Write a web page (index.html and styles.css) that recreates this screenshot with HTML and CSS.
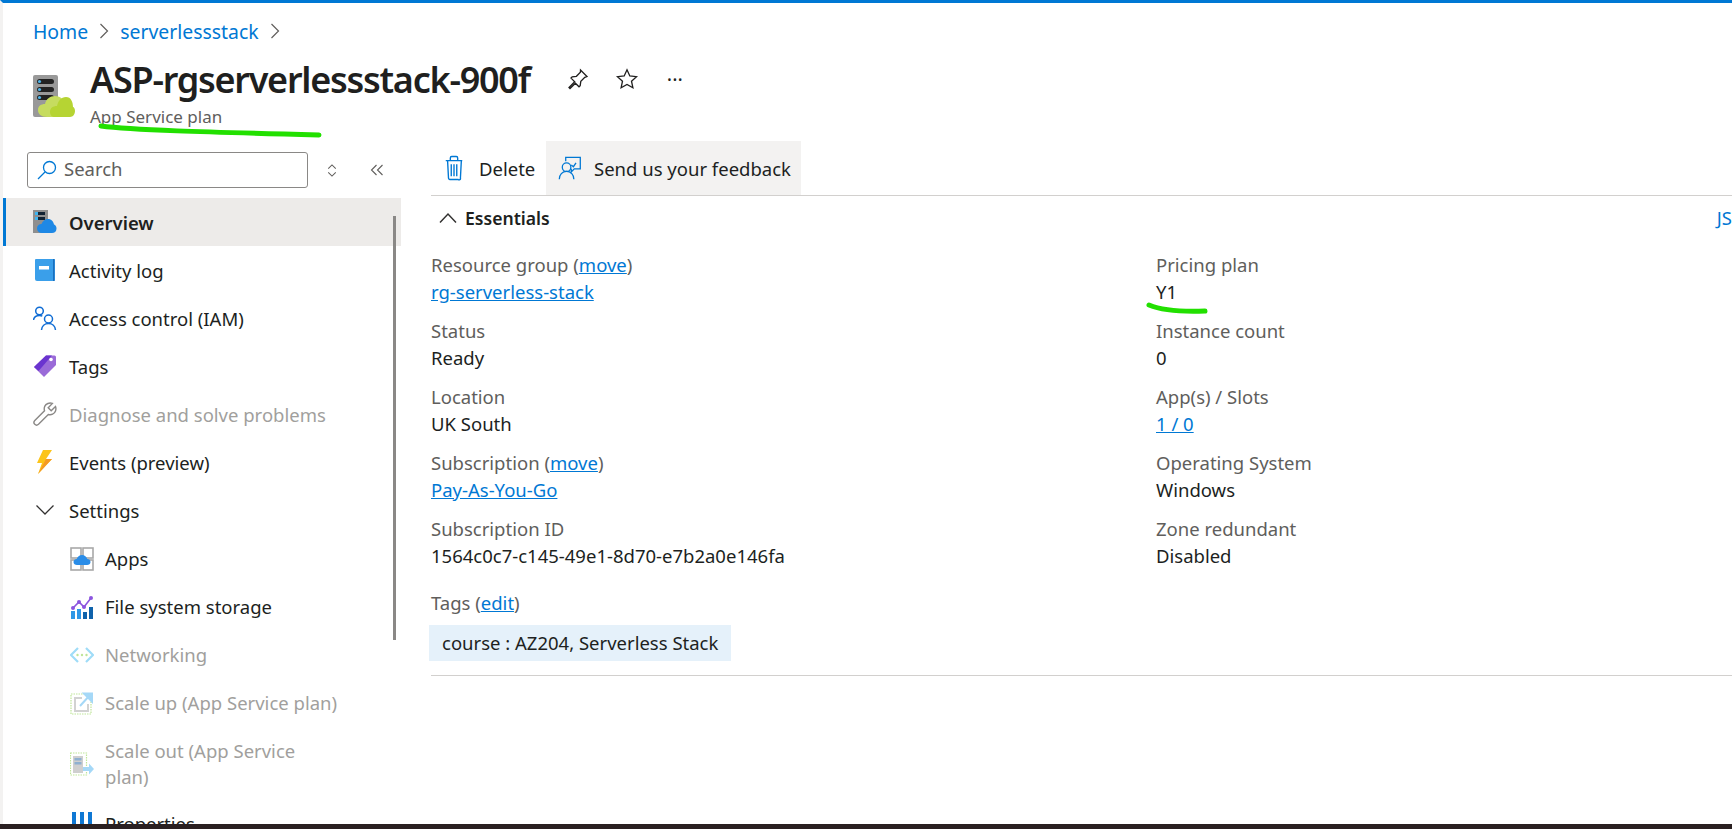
FILE: index.html
```html
<!DOCTYPE html>
<html lang="en">
<head>
    <meta charset="UTF-8">
    <title>ASP-rgserverlessstack-900f - App Service plan</title>
    <link rel="stylesheet" href="styles.css">
</head>
<body>

<div class="page">
    <header class="page-head">
        <nav class="crumbs">
            <a href="#">Home</a>
            <svg class="crumb-sep" viewBox="0 0 10 18"><path d="M1.5 2l7 7-7 7"/></svg>
            <a href="#">serverlessstack</a>
            <svg class="crumb-sep" viewBox="0 0 10 18"><path d="M1.5 2l7 7-7 7"/></svg>
        </nav>
        <div class="title-row">
            <svg class="plan-logo" viewBox="0 0 42 42">
                <rect width="25" height="42" rx="2" fill="#999"/>
                <rect x="4" y="4" width="17" height="5" rx="2.5" fill="#222"/>
                <rect x="4" y="12" width="17" height="5" rx="2.5" fill="#222"/>
                <rect x="4" y="20" width="17" height="5" rx="2.5" fill="#222"/>
                <circle cx="6.5" cy="6.5" r="1.6" fill="#50b4e8"/>
                <circle cx="6.5" cy="14.5" r="1.6" fill="#50b4e8"/>
                <circle cx="6.5" cy="22.5" r="1.6" fill="#50b4e8"/>
                <path d="M14 42c-6 0-9-3-9-7 0-4 3-6 7-6 1-5 5-8 10-8 6 0 9 4 10 9l-2 12z" fill="#c6dc5f"/>
                <path d="M22 42c-3 0-5-2-5-5 0-4 3-6 7-6 1-5 4-9 9-9 5 0 7 5 7 10 1 0 2 2 2 4 0 3-2 6-5 6z" fill="#b6d433"/>
            </svg>
            <div class="title-text">
                <div class="title-line">
                    <h1>ASP-rgserverlessstack-900f</h1>
                    <svg class="title-btn" viewBox="0 0 24 24"><path d="M14.5 3l6.5 6.5-2.2.9-4 4-.6 4.2-1.2 1.2-3.6-3.6L4 21.5l-1-1 5.7-5.8-3.7-3.6 1.2-1.2 4.2-.6 4-4z"/></svg>
                    <svg class="title-btn" viewBox="0 0 24 24"><path d="M12 2.8l2.8 6.2 6.7.7-5 4.5 1.4 6.6L12 17.4l-5.9 3.4 1.4-6.6-5-4.5 6.7-.7z"/></svg>
                    <span class="title-more">···</span>
                </div>
                <div class="subtitle">App Service plan</div>
            </div>
        </div>
    </header>

    <div class="main">
        <aside class="sidebar">
            <div class="search-row">
                <div class="search-box">
                    <svg class="search-icon" viewBox="0 0 20 20"><circle cx="12.5" cy="7.5" r="6"/><path d="M8 12l-7 7"/></svg>
                    <span class="search-text">Search</span>
                </div>
                <svg class="updown" viewBox="0 0 12 16"><path d="M2 6l4-4 4 4M2 10l4 4 4-4"/></svg>
                <svg class="collapse" viewBox="0 0 14 12"><path d="M6.500 1l-5 5 5 5M12.500 1l-5 5 5 5"/></svg>
            </div>
            <ul class="nav">
                <li class="nav-item active">
                    <svg class="nav-icon" viewBox="0 0 24 24">
                        <rect x="0" y="0" width="15" height="23" fill="#8f8f8f"/>
                        <rect x="2" y="2" width="10" height="3" fill="#123"/>
                        <rect x="2" y="7" width="10" height="3" fill="#123"/>
                        <rect x="2" y="2" width="3" height="3" fill="#3fb4ef"/>
                        <rect x="2" y="7" width="3" height="3" fill="#3fb4ef"/>
                        <path d="M9 23c-3 0-5-2-5-4.500 0-3 2-4.500 4.500-4.500 1-3 3.500-5 6.500-5 3.500 0 5.500 2.500 6 5.500 1.500.5 2.500 2 2.500 4 0 3-2 4.500-4.500 4.500z" fill="#1e88e5"/>
                    </svg>
                    <span>Overview</span>
                </li>
                <li class="nav-item">
                    <svg class="nav-icon" viewBox="0 0 24 24">
                        <path d="M3 1h18a1 1 0 011 1v20a1 1 0 01-1 1H4a2 2 0 01-2-2V2a1 1 0 011-1z" fill="#3a9fea"/>
                        <path d="M20 1h1.500v22H20z" fill="#1a6fbd"/>
                        <rect x="6" y="8" width="10" height="3.500" fill="#fff"/>
                    </svg>
                    <span>Activity log</span>
                </li>
                <li class="nav-item">
                    <svg class="nav-icon line-blue" viewBox="0 0 24 24">
                        <circle cx="6.500" cy="5" r="3.800"/>
                        <path d="M0.500 14c.5-3 3-4.500 6-4.500 1 0 2 .2 2.800.5"/>
                        <circle cx="15.500" cy="13" r="4"/>
                        <path d="M8.500 24c.3-3.800 3.200-6.500 7-6.500s6.700 2.700 7 6.500"/>
                    </svg>
                    <span>Access control (IAM)</span>
                </li>
                <li class="nav-item">
                    <svg class="nav-icon" viewBox="0 0 24 24">
                        <path d="M1 13L13 1.500h8.500a1.500 1.500 0 011.500 1.500v8L11 23z" fill="#9a6bd8"/>
                        <path d="M1 13L13 1.500h6L5.500 17z" fill="#6a34cf"/>
                        <circle cx="18" cy="5.500" r="1.800" fill="#fff"/>
                    </svg>
                    <span>Tags</span>
                </li>
                <li class="nav-item off">
                    <svg class="nav-icon line-gray" viewBox="0 0 24 24">
                        <path d="M22.500 4.500l-4.300 4.200-3-3L19.400 1.400c-3-1-6.500.2-7.700 3-.6 1.500-.6 3-.2 4.400L1.800 18.600c-1 1-1 2.700 0 3.700s2.600 1 3.700 0l9.800-9.800c1.400.4 3 .3 4.300-.3 2.800-1.300 4-4.700 2.900-7.700z"/>
                    </svg>
                    <span>Diagnose and solve problems</span>
                </li>
                <li class="nav-item">
                    <svg class="nav-icon" viewBox="0 0 24 24">
                        <path d="M10 0h9l-6 9h6L5 24l4-11H4z" fill="#fcc419"/>
                        <path d="M13 9h6L5 24z" fill="#f59a23"/>
                    </svg>
                    <span>Events (preview)</span>
                </li>
                <li class="nav-item settings">
                    <svg class="nav-icon line-dark" viewBox="0 0 24 24"><path d="M3.500 7.500l8.500 8.500 8.500-8.500"/></svg>
                    <span>Settings</span>
                </li>
                <li class="nav-item child">
                    <svg class="nav-icon" viewBox="0 0 24 24">
                        <g fill="none" stroke="#a8a8a8" stroke-width="1.600">
                            <rect x="1" y="1" width="10" height="10"/><rect x="13" y="1" width="10" height="10"/>
                            <rect x="1" y="13" width="10" height="10"/><rect x="13" y="13" width="10" height="10"/>
                        </g>
                        <path d="M7 18c-2 0-3.500-1-3.500-3 0-1.800 1.500-3 3.200-3 .6-2 2.700-4 5.300-4s4.700 2 5.300 4c1.700 0 3.200 1.200 3.200 3 0 2-1.500 3-3.500 3z" fill="#2a8de8"/>
                    </svg>
                    <span>Apps</span>
                </li>
                <li class="nav-item child">
                    <svg class="nav-icon" viewBox="0 0 24 24">
                        <rect x="1" y="16" width="4" height="8" fill="#2f97e6"/>
                        <rect x="7" y="14" width="4" height="10" fill="#2f97e6"/>
                        <rect x="13" y="17" width="4" height="7" fill="#0f62ab"/>
                        <rect x="19" y="12" width="4" height="12" fill="#0f62ab"/>
                        <path d="M3 13l6-6 5 5 7-9" fill="none" stroke="#8c55df" stroke-width="1.600"/>
                        <circle cx="3" cy="13" r="2" fill="#8c55df"/><circle cx="9" cy="7" r="2" fill="#8c55df"/>
                        <circle cx="14" cy="12" r="2" fill="#8c55df"/><circle cx="21" cy="3" r="2" fill="#8c55df"/>
                    </svg>
                    <span>File system storage</span>
                </li>
                <li class="nav-item child off">
                    <svg class="nav-icon" viewBox="0 0 24 24">
                        <path d="M8 5l-7 7 7 7M16 5l7 7-7 7" fill="none" stroke="#9fdcf8" stroke-width="2.200"/>
                        <circle cx="7.500" cy="12" r="1.200" fill="#bfe59a"/><circle cx="12" cy="12" r="1.200" fill="#bfe59a"/><circle cx="16.500" cy="12" r="1.200" fill="#bfe59a"/>
                    </svg>
                    <span>Networking</span>
                </li>
                <li class="nav-item child off">
                    <svg class="nav-icon" viewBox="0 0 24 24">
                        <rect x="1" y="3" width="20" height="20" fill="none" stroke="#bfe59a" stroke-width="1.200" stroke-dasharray="1.500 1"/>
                        <path d="M12 7H5v13h13v-7" fill="none" stroke="#d2d2d2" stroke-width="2"/>
                        <path d="M10 15L20 4M14 2.500h8v8z" fill="#a5d8f7" stroke="#a5d8f7" stroke-width="2"/>
                    </svg>
                    <span>Scale up (App Service plan)</span>
                </li>
                <li class="nav-item child off two-line">
                    <svg class="nav-icon" viewBox="0 0 24 24">
                        <rect x="0.500" y="1" width="16" height="22" fill="none" stroke="#bfe59a" stroke-width="1.200" stroke-dasharray="1.500 1"/>
                        <rect x="3" y="4" width="10" height="17" fill="#cfcfcf"/>
                        <rect x="4.500" y="6" width="7" height="2.500" fill="#8fb0d0"/>
                        <rect x="4.500" y="10" width="7" height="2.500" fill="#8fb0d0"/>
                        <path d="M13 16h6v-3.500l5 5.500-5 5.500V20h-6z" fill="#a5d8f7" transform="translate(0 -1)"/>
                    </svg>
                    <span>Scale out (App Service plan)</span>
                </li>
                <li class="nav-item child">
                    <svg class="nav-icon" viewBox="0 0 24 24">
                        <rect x="2" y="0" width="4" height="16" fill="#0f78d4"/>
                        <rect x="10" y="0" width="4" height="16" fill="#0f78d4"/>
                        <rect x="18" y="0" width="4" height="16" fill="#0f78d4"/>
                    </svg>
                    <span>Properties</span>
                </li>
            </ul>
            <div class="nav-scroll"></div>
        </aside>

        <section class="content">
            <div class="toolbar">
                <div class="tool first">
                    <svg class="tool-icon" viewBox="0 0 24 28">
                        <path d="M3 6h18M8 6V3a1.500 1.500 0 011.500-1.500h5A1.500 1.500 0 0116 3v3M5 6l1 19a1.500 1.500 0 001.500 1.500h9A1.500 1.500 0 0019 25l1-19M9 10v13M12 10v13M15 10v13"/>
                    </svg>
                    <span>Delete</span>
                </div>
                <div class="tool hover">
                    <svg class="tool-icon wide" viewBox="0 0 28 28">
                        <path d="M9 6V1.500h17V15h-7l-3.500 3.500V15"/>
                        <path d="M15.500 10.500l2.500 2 3-4.500"/>
                        <circle cx="10" cy="13" r="5"/>
                        <path d="M1.500 27c0-5 3.500-9 8.500-9s8.500 4 8.500 9"/>
                    </svg>
                    <span>Send us your feedback</span>
                </div>
            </div>

            <div class="essentials-head">
                <svg class="chev-up" viewBox="0 0 18 12"><path d="M1 10.500L9 2l8 8.500"/></svg>
                <h2>Essentials</h2>
                <a class="json-link" href="#">JS</a>
            </div>

            <div class="facts">
                <div class="fact">
                    <div class="fact-label">Resource group (<a href="#">move</a>)</div>
                    <div class="fact-value"><a href="#">rg-serverless-stack</a></div>
                </div>
                <div class="fact">
                    <div class="fact-label">Pricing plan</div>
                    <div class="fact-value">Y1</div>
                </div>
                <div class="fact">
                    <div class="fact-label">Status</div>
                    <div class="fact-value">Ready</div>
                </div>
                <div class="fact">
                    <div class="fact-label">Instance count</div>
                    <div class="fact-value">0</div>
                </div>
                <div class="fact">
                    <div class="fact-label">Location</div>
                    <div class="fact-value">UK South</div>
                </div>
                <div class="fact">
                    <div class="fact-label">App(s) / Slots</div>
                    <div class="fact-value"><a href="#">1 / 0</a></div>
                </div>
                <div class="fact">
                    <div class="fact-label">Subscription (<a href="#">move</a>)</div>
                    <div class="fact-value"><a href="#">Pay-As-You-Go</a></div>
                </div>
                <div class="fact">
                    <div class="fact-label">Operating System</div>
                    <div class="fact-value">Windows</div>
                </div>
                <div class="fact">
                    <div class="fact-label">Subscription ID</div>
                    <div class="fact-value">1564c0c7-c145-49e1-8d70-e7b2a0e146fa</div>
                </div>
                <div class="fact">
                    <div class="fact-label">Zone redundant</div>
                    <div class="fact-value">Disabled</div>
                </div>
            </div>

            <div class="tags">
                <div class="fact-label">Tags (<a href="#">edit</a>)</div>
                <div class="tag-pill">course : AZ204, Serverless Stack</div>
            </div>
        </section>
    </div>

    <div class="taskbar"></div>

    <!-- green marker scribbles drawn on top of the screenshot -->
    <svg class="marker" viewBox="0 0 1732 829">
        <path d="M101 126c30 4 100 6 218 9"/>
        <path d="M1149 305c12 5 30 7 56 6"/>
    </svg>
</div>

</body>
</html>
```

FILE: styles.css
```css
* {
    box-sizing: border-box;
}

html, body {
    margin: 0;
    padding: 0;
    height: 100%;
    overflow: hidden;
}

body {
    font-family: "Noto Sans", sans-serif;
    font-size: 18.5px;
    color: #201f1e;
    background: #fff;
}

a {
    color: #0078d4;
}

.page {
    position: relative;
    display: flex;
    flex-direction: column;
    height: 829px;
    border-top: 3px solid #0078d4;
    border-left: 3px solid #f3f2f1;
}

.page-head {
    height: 138px;
    flex-shrink: 0;
    padding-left: 30px;
}

.crumbs {
    display: flex;
    align-items: center;
    gap: 11px;
    height: 28px;
    margin-top: 14px;
    font-size: 19.4px;
}

.crumbs a {
    text-decoration: none;
}

.crumb-sep {
    width: 10px;
    height: 18px;
    fill: none;
    stroke: #605e5c;
    stroke-width: 1.2;
}

.title-row {
    display: flex;
    margin-top: 8px;
}

.plan-logo {
    width: 42px;
    height: 42px;
    margin-top: 22px;
    margin-right: 15px;
}

.title-line {
    display: flex;
    align-items: center;
    height: 52px;
}

h1 {
    margin: 0;
    font-size: 36px;
    font-weight: 600;
    letter-spacing: -1.25px;
}

.title-btn {
    width: 24px;
    height: 24px;
    fill: none;
    stroke: #201f1e;
    stroke-width: 1.3;
    margin-left: 36px;
}

.title-btn + .title-btn {
    margin-left: 25px;
}

.title-more {
    margin-left: 28px;
    font-size: 20px;
}

.subtitle {
    color: #605e5c;
    font-size: 17px;
    line-height: 24px;
    margin-top: 0;
}

.main {
    flex: 1;
    display: flex;
    min-height: 0;
    overflow: hidden;
}

.sidebar {
    position: relative;
    width: 398px;
    flex-shrink: 0;
}

.search-row {
    display: flex;
    align-items: center;
    height: 36px;
    margin: 11px 0 10px 24px;
}

.search-box {
    display: flex;
    align-items: center;
    width: 281px;
    height: 36px;
    border: 1px solid #8a8886;
    border-radius: 3px;
    padding-left: 9px;
    color: #605e5c;
}

.search-text {
    margin-bottom: 3px;
}

.search-icon {
    width: 20px;
    height: 20px;
    margin-right: 7px;
    fill: none;
    stroke: #0078d4;
    stroke-width: 1.3;
}

.updown {
    width: 12px;
    height: 15px;
    margin-left: 18px;
    fill: none;
    stroke: #605e5c;
    stroke-width: 1.1;
}

.collapse {
    width: 14px;
    height: 12px;
    margin-left: 32px;
    fill: none;
    stroke: #605e5c;
    stroke-width: 1.1;
}

.nav {
    list-style: none;
    margin: 0;
    padding: 0;
}

.nav-item {
    display: flex;
    align-items: center;
    gap: 12px;
    min-height: 48px;
    padding-left: 30px;
}

.nav-item.active {
    background: #edebe9;
    font-weight: 600;
    box-shadow: inset 3px 0 0 #0078d4;
}

.nav-item.settings {
    margin-bottom: 1px;
}

.nav-item.child {
    padding-left: 67px;
    gap: 11px;
}

.nav-item.child span {
    line-height: 26px;
}

.nav-item.two-line {
    min-height: 73px;
}

.nav-item.two-line span {
    max-width: 210px;
}

.nav-item.off {
    color: #a19f9d;
}

.nav-icon {
    width: 24px;
    height: 24px;
    flex-shrink: 0;
}

.line-blue {
    fill: none;
    stroke: #0f6cd4;
    stroke-width: 1.5;
}

.line-gray {
    fill: none;
    stroke: #8a8886;
    stroke-width: 1.4;
}

.line-dark {
    fill: none;
    stroke: #323130;
    stroke-width: 1.3;
}

.nav-scroll {
    position: absolute;
    left: 390px;
    top: 75px;
    width: 3px;
    height: 424px;
    background: #8a8886;
}

.content {
    flex: 1;
    min-width: 0;
    padding-left: 30px;
}

.toolbar {
    display: flex;
    height: 55px;
    border-bottom: 1px solid #d2d0ce;
}

.tool {
    display: flex;
    align-items: center;
    height: 54px;
    gap: 12px;
}

.tool.first {
    width: 115px;
    padding-left: 12px;
    gap: 14px;
}

.tool.hover {
    background: #f3f2f1;
    width: 255px;
    padding-left: 12px;
}

.tool-icon {
    width: 22px;
    height: 26px;
    fill: none;
    stroke: #0078d4;
    stroke-width: 1.5;
}

.tool-icon.wide {
    width: 24px;
}

.essentials-head {
    display: flex;
    align-items: center;
    height: 43px;
    padding-left: 8px;
}

.chev-up {
    width: 18px;
    height: 12px;
    margin-right: 8px;
    fill: none;
    stroke: #323130;
    stroke-width: 1.5;
}

h2 {
    margin: 0;
    font-size: 17.6px;
    font-weight: 600;
}

.json-link {
    margin-left: auto;
    text-decoration: none;
}

.facts {
    display: grid;
    grid-template-columns: 725px 1fr;
    row-gap: 12px;
    margin-top: 13px;
}

.fact-label {
    color: #605e5c;
    line-height: 25px;
}

.fact-value {
    line-height: 29px;
}

.tags {
    margin-top: 20px;
    padding-bottom: 14px;
    border-bottom: 1px solid #d2d0ce;
}

.tag-pill {
    display: inline-block;
    height: 36px;
    margin: 10px 0 0 -2px;
    padding: 0 13px;
    line-height: 36px;
    background: #e5f1fa;
    vertical-align: top;
}

.taskbar {
    height: 5px;
    flex-shrink: 0;
    margin-left: -3px;
    background: #2a2021;
}

.marker {
    position: absolute;
    left: -3px;
    top: -3px;
    width: 1732px;
    height: 829px;
    pointer-events: none;
    fill: none;
    stroke: #22e000;
    stroke-width: 5;
    stroke-linecap: round;
}
```
